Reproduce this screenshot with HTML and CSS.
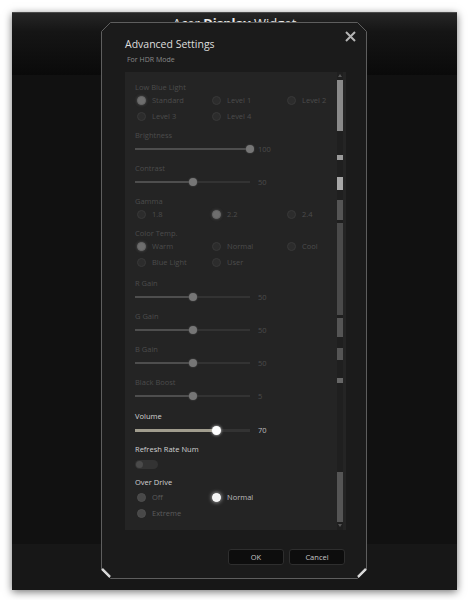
FILE: index.html
```html
<!DOCTYPE html>
<html lang="en">
<head>
  <meta charset="UTF-8">
  <title>Acer Display Widget</title>
  <link rel="stylesheet" href="styles.css">
</head>
<body>
  <div class="window">
    <div class="win-header">
      <h1 class="win-title">Acer <b>Display</b> Widget</h1>
    </div>
    <div class="win-main"></div>
    <div class="win-footer"></div>

    <div class="dialog">
      <svg class="dialog-frame" width="266" height="557" viewBox="0 0 266 557">
        <polygon points="9.5,0.5 256.5,0.5 265.5,9.5 265.5,547.5 256.5,556.5 9.5,556.5 0.5,547.5 0.5,9.5" fill="none" stroke="#5e5e5e" stroke-width="1"/>
        <line x1="1" y1="547" x2="9" y2="555" stroke="#d8d8d8" stroke-width="2.5"/>
        <line x1="265" y1="547" x2="257" y2="555" stroke="#d8d8d8" stroke-width="2.5"/>
      </svg>
      <button class="close" type="button">
        <svg width="11" height="11" viewBox="0 0 11 11">
          <path d="M1 1 L10 10 M10 1 L1 10" stroke="#b4b4b4" stroke-width="2"/>
        </svg>
      </button>

      <h2 class="dlg-title">Advanced Settings</h2>
      <p class="dlg-sub">For HDR Mode</p>

      <div class="panel">
        <div class="settings">
          <div class="group off">
            <div class="label">Low Blue Light</div>
            <div class="radios">
              <div class="radio sel"><span class="dot"></span>Standard</div>
              <div class="radio"><span class="dot"></span>Level 1</div>
              <div class="radio"><span class="dot"></span>Level 2</div>
              <div class="radio"><span class="dot"></span>Level 3</div>
              <div class="radio"><span class="dot"></span>Level 4</div>
            </div>
          </div>

          <div class="group off">
            <div class="label">Brightness</div>
            <div class="slider">
              <div class="track"><div class="fill" style="width:100%"><span class="thumb"></span></div></div>
              <span class="val">100</span>
            </div>
          </div>

          <div class="group off">
            <div class="label">Contrast</div>
            <div class="slider">
              <div class="track"><div class="fill" style="width:50%"><span class="thumb"></span></div></div>
              <span class="val">50</span>
            </div>
          </div>

          <div class="group off">
            <div class="label">Gamma</div>
            <div class="radios">
              <div class="radio"><span class="dot"></span>1.8</div>
              <div class="radio sel"><span class="dot"></span>2.2</div>
              <div class="radio"><span class="dot"></span>2.4</div>
            </div>
          </div>

          <div class="group off wide-gap">
            <div class="label">Color Temp.</div>
            <div class="radios">
              <div class="radio sel"><span class="dot"></span>Warm</div>
              <div class="radio"><span class="dot"></span>Normal</div>
              <div class="radio"><span class="dot"></span>Cool</div>
              <div class="radio"><span class="dot"></span>Blue Light</div>
              <div class="radio"><span class="dot"></span>User</div>
            </div>
          </div>

          <div class="group off">
            <div class="label">R Gain</div>
            <div class="slider">
              <div class="track"><div class="fill" style="width:50%"><span class="thumb"></span></div></div>
              <span class="val">50</span>
            </div>
          </div>

          <div class="group off">
            <div class="label">G Gain</div>
            <div class="slider">
              <div class="track"><div class="fill" style="width:50%"><span class="thumb"></span></div></div>
              <span class="val">50</span>
            </div>
          </div>

          <div class="group off">
            <div class="label">B Gain</div>
            <div class="slider">
              <div class="track"><div class="fill" style="width:50%"><span class="thumb"></span></div></div>
              <span class="val">50</span>
            </div>
          </div>

          <div class="group off mid-gap">
            <div class="label">Black Boost</div>
            <div class="slider">
              <div class="track"><div class="fill" style="width:50%"><span class="thumb"></span></div></div>
              <span class="val">5</span>
            </div>
          </div>

          <div class="group on">
            <div class="label">Volume</div>
            <div class="slider">
              <div class="track"><div class="fill" style="width:70%"><span class="thumb"></span></div></div>
              <span class="val">70</span>
            </div>
          </div>

          <div class="group on tight">
            <div class="label">Refresh Rate Num</div>
            <div class="toggle"><span class="knob"></span></div>
          </div>

          <div class="group on">
            <div class="label">Over Drive</div>
            <div class="radios od">
              <div class="radio dis"><span class="dot"></span>Off</div>
              <div class="radio sel"><span class="dot"></span>Normal</div>
              <div class="radio dis first"><span class="dot"></span>Extreme</div>
            </div>
          </div>
        </div>

        <svg class="scroll" width="6" height="458" viewBox="0 0 6 458">
          <rect x="0" y="0" width="6" height="458" fill="#1f1f1f"/>
          <polygon points="3,2 5,5 1,5" fill="#555"/>
          <rect x="0" y="8" width="6" height="51" fill="#8a8a8a"/>
          <rect x="0" y="83" width="6" height="5" fill="#9a9a9a"/>
          <rect x="0" y="105" width="6" height="13" fill="#a8a8a8"/>
          <rect x="0" y="128" width="6" height="20" fill="#555"/>
          <rect x="0" y="151" width="6" height="92" fill="#4a4a4a"/>
          <rect x="0" y="246" width="6" height="19" fill="#555"/>
          <rect x="0" y="276" width="6" height="12" fill="#555"/>
          <rect x="0" y="306" width="6" height="5" fill="#666"/>
          <rect x="0" y="400" width="6" height="50" fill="#555"/>
          <polygon points="1,452 5,452 3,455" fill="#555"/>
        </svg>
      </div>

      <div class="actions">
        <button class="btn" type="button">OK</button>
        <button class="btn" type="button">Cancel</button>
      </div>
    </div>
  </div>
</body>
</html>
```

FILE: styles.css
```css
body {
  margin: 0;
  padding: 12px;
  background: #ffffff;
  font-family: 'Open Sans', 'Liberation Sans', sans-serif;
}
.window {
  position: relative;
  width: 445px;
  height: 578px;
  display: flex;
  flex-direction: column;
  background: #101010;
  border-top: 1px solid #4a4a4a;
  box-sizing: border-box;
  box-shadow: 0 2px 8px rgba(0,0,0,0.55);
}
.win-header {
  height: 62px;
  background: linear-gradient(#262626, #151515 30%, #0a0a0a);
  text-align: center;
}
.win-title {
  margin: 1px 0 0;
  font-size: 13px;
  font-weight: 400;
  color: #e8e8e8;
  line-height: 18px;
}
.win-title b {
  font-weight: 700;
}
.win-main {
  flex: 1;
  background: #111111;
}
.win-footer {
  height: 46px;
  background: #171717;
}
.dialog {
  position: absolute;
  left: 89px;
  top: 9px;
  width: 266px;
  height: 557px;
  box-sizing: border-box;
  padding: 15px 21px 0 24px;
  background: #1b1b1b;
  clip-path: polygon(9px 0, 257px 0, 266px 9px, 266px 548px, 257px 557px, 9px 557px, 0 548px, 0 9px);
}
.dialog-frame {
  position: absolute;
  left: 0;
  top: 0;
}
.close {
  position: absolute;
  right: 11px;
  top: 9px;
  padding: 0;
  border: none;
  background: none;
  line-height: 0;
}
.dlg-title {
  margin: 0;
  font-size: 10.5px;
  font-weight: 400;
  line-height: 14px;
  color: #dedede;
}
.dlg-sub {
  margin: 4px 0 0 2px;
  font-size: 7px;
  line-height: 10px;
  color: #8a8a8a;
}
.panel {
  margin-top: 7px;
  height: 458px;
  display: flex;
  background: #242424;
}
.settings {
  flex: 1;
  min-width: 0;
  padding: 10px 0 0 10px;
}
.scroll {
  flex-shrink: 0;
  margin-right: 3px;
}
.group {
  margin-bottom: 9px;
}
.group.wide-gap {
  margin-bottom: 11px;
}
.group.mid-gap {
  margin-bottom: 10px;
}
.group.tight {
  margin-bottom: 8px;
}
.label {
  font-size: 7.5px;
  line-height: 10px;
  height: 10px;
}
.off .label,
.off .radio,
.off .val {
  color: #4c4c4c;
}
.on .label {
  color: #d2d2d2;
}
.radios {
  display: grid;
  grid-template-columns: 75px 75px 60px;
  row-gap: 6px;
  margin-top: 3px;
}
.radio {
  display: flex;
  align-items: center;
  gap: 6px;
  height: 10px;
  font-size: 7.5px;
  white-space: nowrap;
}
.dot {
  width: 7px;
  height: 7px;
  margin-left: 2px;
  border-radius: 50%;
  background: #2c2c2c;
  border: 1px solid #383838;
}
.off .sel .dot {
  background: #6e6e6e;
  border-color: #666;
  box-shadow: 0 0 3px #555;
}
.radios.od {
  margin-top: 5px;
  row-gap: 6px;
}
.od .radio {
  color: #bdbdbd;
}
.od .first {
  grid-column: 1;
}
.od .dis {
  color: #5c5c5c;
}
.od .dis .dot {
  background: #484848;
  border-color: #4e4e4e;
}
.od .sel .dot {
  background: #f4f4f4;
  border-color: #ffffff;
  box-shadow: 0 0 4px #cfcfcf;
}
.slider {
  display: flex;
  align-items: center;
  height: 10px;
  margin-top: 4px;
}
.track {
  width: 115px;
  height: 2px;
  background: #333333;
}
.fill {
  position: relative;
  height: 100%;
  background: #4e4e4e;
}
.thumb {
  position: absolute;
  right: -4px;
  top: -3px;
  width: 8px;
  height: 8px;
  border-radius: 50%;
  background: #767676;
  box-shadow: 0 0 2px #555;
}
.on .track {
  height: 3px;
}
.on .fill {
  background: #a19d8e;
}
.on .thumb {
  right: -5px;
  top: -3px;
  width: 9px;
  height: 9px;
  background: #ffffff;
  box-shadow: 0 0 3px #ddd;
}
.val {
  margin-left: 8px;
  font-size: 7.5px;
}
.on .val {
  color: #bdbdbd;
}
.toggle {
  margin-top: 6px;
  width: 23px;
  height: 9px;
  border-radius: 5px;
  background: #333333;
  display: flex;
  align-items: center;
  padding-left: 1px;
  box-sizing: border-box;
}
.knob {
  width: 7px;
  height: 7px;
  border-radius: 50%;
  background: #4a4a4a;
}
.actions {
  display: flex;
  justify-content: flex-end;
  gap: 5px;
  margin-top: 19px;
  padding-right: 1px;
}
.btn {
  width: 56px;
  height: 16px;
  padding: 0;
  background: #0d0d0d;
  border: 1px solid #2e2e2e;
  border-radius: 3px;
  color: #c4c4c4;
  font-family: 'Open Sans', 'Liberation Sans', sans-serif;
  font-size: 7.5px;
}
```
